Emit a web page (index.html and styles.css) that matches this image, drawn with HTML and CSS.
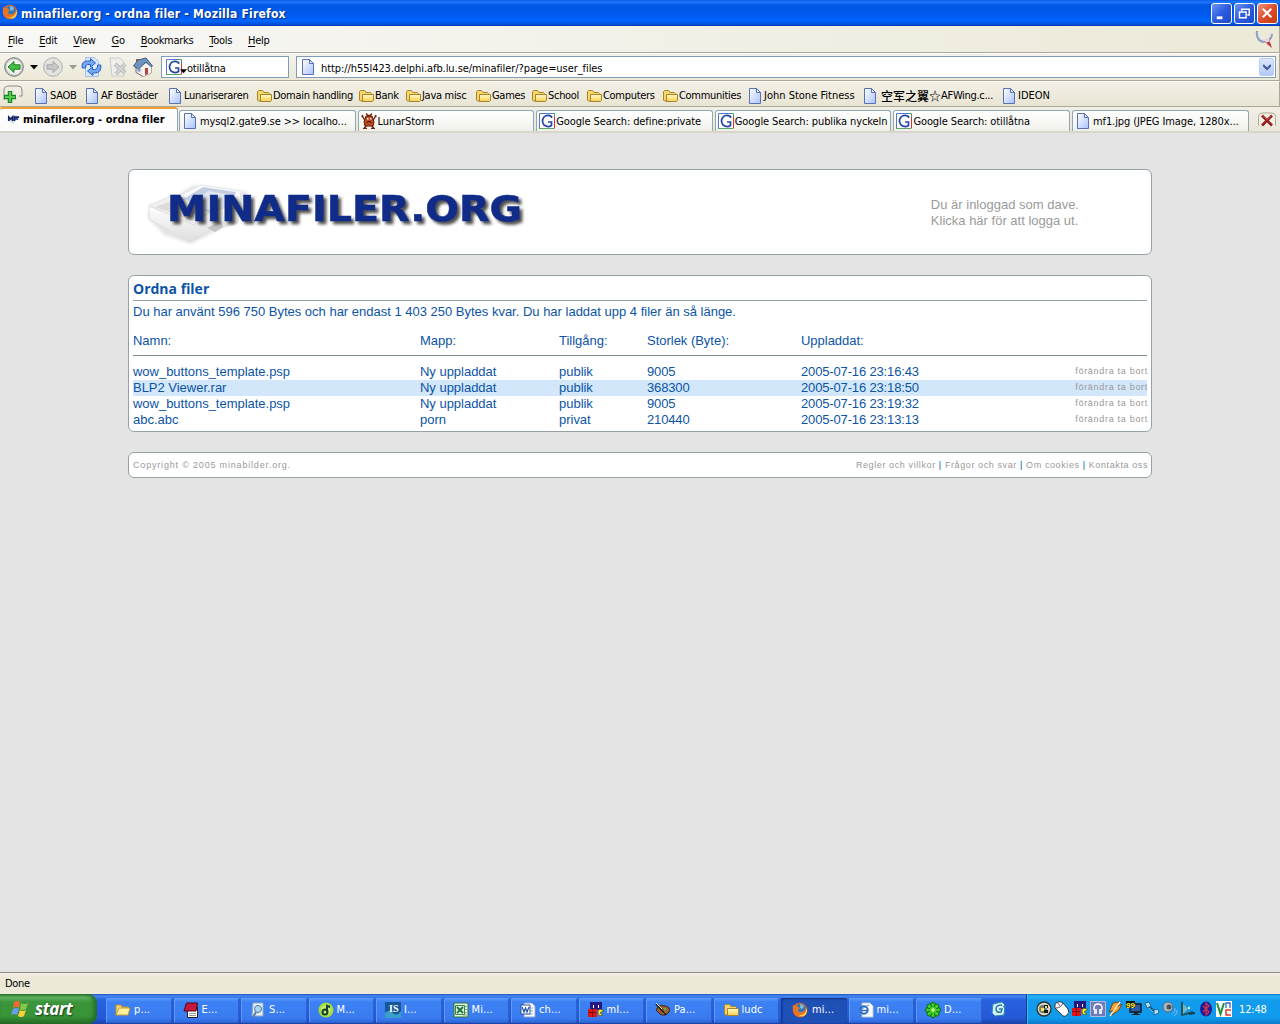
FILE: index.html
```html
<!DOCTYPE html>
<html lang="sv">
<head>
<meta charset="utf-8">
<title>minafiler.org - ordna filer</title>
<link rel="stylesheet" href="styles.css">
</head>
<body>
<svg class="defs" width="0" height="0">
  <defs>
    <linearGradient id="gPage" x1="0" y1="0" x2="1" y2="1"><stop offset="0" stop-color="#fff"/><stop offset="1" stop-color="#a9c2fb"/></linearGradient>
    <linearGradient id="gFolder" x1="0" y1="0" x2="0" y2="1"><stop offset="0" stop-color="#fffbc8"/><stop offset="1" stop-color="#f3cf51"/></linearGradient>
    <radialGradient id="gBtn"><stop offset="0" stop-color="#fff"/><stop offset=".7" stop-color="#f0f3ef"/><stop offset="1" stop-color="#aeb5ae"/></radialGradient>
    <linearGradient id="gFox" x1="0" y1="0" x2="1" y2="1"><stop offset="0" stop-color="#ef7b25"/><stop offset=".6" stop-color="#df4d12"/><stop offset="1" stop-color="#ffdf50"/></linearGradient>
    <linearGradient id="gBox" x1="0" y1="0" x2="0" y2="1"><stop offset="0" stop-color="#fff"/><stop offset="1" stop-color="#dedede"/></linearGradient>
    <filter id="soft" x="-10%" y="-20%" width="120%" height="150%"><feGaussianBlur stdDeviation="1.5"/></filter>
    <symbol id="page" viewBox="0 0 16 16"><path d="M2.5.5h7l4 4v11h-11z" fill="url(#gPage)" stroke="#5870b4"/><path d="M9.5.5v4h4z" fill="#dce6ff" stroke="#5870b4"/></symbol>
    <symbol id="folder" viewBox="0 0 16 16"><path d="M1.500 12V3.500l1-1h4l1.500 2h4.500l1 1V13H2.500z" fill="#f5d867" stroke="#a8822c"/><path d="M4.500 6.500h11v6l-1 1H4.500z" fill="url(#gFolder)" stroke="#a8822c"/></symbol>
    <symbol id="xpfolder" viewBox="0 0 16 16"><path d="M1 13V3h5l1 2h6v2" fill="#f5dc7b" stroke="#b88a28"/><path d="M1 13l3-7h11l-2 7z" fill="#fff09b" stroke="#c99d38"/></symbol>
    <symbol id="fox" viewBox="0 0 16 16"><circle cx="8" cy="8" r="7.300" fill="url(#gFox)"/><circle cx="8.500" cy="6.700" r="4.900" fill="#2d77bb"/><path d="M8 2q4 0 4 3l-2 2-2-1z" fill="#75bde0"/><path d="M1 2q0 2 2 2 3-1 3 1l2 1-2 2q0 3 4 2 4-1 4-5 2 6-2 9-5 3-9-1-3-4-2-11z" fill="#e97423"/><path d="M13 3q3 5-1 9-3 2-6 1 8 4 9-5z" fill="#ffd550"/></symbol>
    <symbol id="google" viewBox="0 0 16 16"><path fill="#fff" d="M0 0h16v16H0z"/><path d="M.5 16V.5H13" stroke="#5376d3" fill="none"/><path d="M13 .5h2.500V10" stroke="#47a05a" fill="none"/><path d="M15.500 4v11.500" stroke="#d2323b"/><path d="M0 15.500h15" stroke="#58a765"/><path d="M12.500 5V3.500Q8 1 5 4 2 8 5 12q4 3 7.500.500V9H9" fill="none" stroke="#2646a5" stroke-width="1.700"/></symbol>
    <symbol id="mirc" viewBox="0 0 16 16"><path d="M2 0h12v8H2z" fill="#25177f"/><path d="M5.500 3v3M10.500 3v3" stroke="#fff"/><path d="M0 7h9v8H0z" fill="#e01616"/><path d="M0 10.500h8M4.500 7v8" stroke="#86090c"/><path d="M15 8q-5-2-5 2 0 5 5 3l-3-2 3-2z" fill="#ffed2a" stroke="#443b08" stroke-width=".6"/></symbol>
    <symbol id="crab" viewBox="0 0 16 16"><path d="M5 .5l2 2h2l2-2M1 2l2 4 2 1M15 2l-2 4-2 1M.500 3.500h2M13.500 3.500h2" fill="none" stroke="#6d200d" stroke-width="1.300"/><path d="M5 3h6l1 3 1 3-1 4H4L3 9l1-3z" fill="#c04a1c" stroke="#5d1a09"/><path d="M5 13l-2 2.500h3M11 13l2 2.500h-3" fill="none" stroke="#6d200d" stroke-width="1.500"/><path d="M6 5h1.500v1.500H6zM9 5h1.500v1.500H9z" fill="#fff"/><path d="M5.500 9.500q2.500-2 5 0" stroke="#2c0b02" fill="none"/></symbol>
  </defs>
</svg>

<header class="titlebar">
  <svg class="ic"><use href="#fox"/></svg>
  <h1>minafiler.org - ordna filer - Mozilla Firefox</h1>
  <div class="winbtns">
    <span class="wb"><svg viewBox="0 0 20 20"><path d="M5 14.500h6" stroke="#fff" stroke-width="3"/></svg></span>
    <span class="wb"><svg viewBox="0 0 20 20"><path d="M7 7V5.500h8v6h-2" fill="none" stroke="#fff" stroke-width="1.500"/><path d="M4.700 8.500h7v6h-7z" fill="none" stroke="#fff" stroke-width="1.500"/></svg></span>
    <span class="wb close"><svg viewBox="0 0 20 20"><path d="M5 5l9 9M14 5l-9 9" stroke="#fff" stroke-width="2.200"/></svg></span>
  </div>
</header>

<nav class="menubar ui">
  <span><u>F</u>ile</span><span><u>E</u>dit</span><span><u>V</u>iew</span><span><u>G</u>o</span><span><u>B</u>ookmarks</span><span><u>T</u>ools</span><span><u>H</u>elp</span>
  <svg class="throbber" viewBox="0 0 20 20"><path d="M3 2q-1 10 7 11 7-1 8-8" fill="none" stroke="#8c9dbf" stroke-width="2.200"/><path d="M4 3q0 8 6 8 5 0 7-5" fill="none" stroke="#dbe1ec"/><path d="M12 11l4 2 2 6-5-4z" fill="#c0393f"/><circle cx="13" cy="11" r="2.300" fill="#f3d3d1"/></svg>
</nav>

<div class="navbar ui">
  <svg class="round" viewBox="0 0 20 20"><circle cx="10" cy="10" r="9.300" fill="url(#gBtn)" stroke="#777e77"/><path d="M4 10l6-5.500v3.300h6v4.400h-6v3.300z" fill="#46bd45" stroke="#188020"/></svg>
  <svg class="arr" viewBox="0 0 8 5"><path d="M0 0h8L4 4.500z"/></svg>
  <svg class="round" viewBox="0 0 20 20"><circle cx="10" cy="10" r="9.300" fill="#e3e3e0" stroke="#adaead"/><path d="M16 10l-6-5.500v3.300H4v4.400h6v3.300z" fill="#c6c7c7" stroke="#a5a7a6"/></svg>
  <svg class="arr dim" viewBox="0 0 8 5"><path d="M0 0h8L4 4.500z"/></svg>
  <svg class="reload" viewBox="0 0 20 20"><path d="M4 .5h9l4 4v15H4z" fill="#dbe7ff" stroke="#a7bdea"/><path d="M.700 11Q-.500 4 6 4h3V1.500l5 4.500-5 4V7.500H6Q3.500 8 4 11z" fill="#75a7f5" stroke="#2863c8"/><path d="M19.300 8q1 8-6 8h-2v2.500L6 14l5-4v2.500h2q3.500 0 3-4.500z" fill="#75a7f5" stroke="#2863c8"/></svg>
  <svg class="stop" viewBox="0 0 20 20"><path d="M2 1h10l4 4v14H4z" fill="#eeeeec" stroke="#cacac8"/><path d="M7 7l10 9M17 7L8 17" stroke="#b6b7b6" stroke-width="4"/><path d="M7 7l10 9M17 7L8 17" stroke="#d5d5d4" stroke-width="2"/></svg>
  <svg class="home" viewBox="0 0 20 20"><path d="M3 9l6-3 9 2v8l-8 3.500-7-4z" fill="#efebe2" stroke="#756e70"/><path d="M3 2h3v5H3z" fill="#9b5b5a"/><path d="M.500 9L5 3l8-2 6.500 8-1.500 1-5-5-7.500 7z" fill="#6c94bf" stroke="#405d83"/><path d="M9 12l4-6 5 4v6l-8 3.500z" fill="#f8f4ee"/><path d="M12 11h3v6l-3 1z" fill="#b64442"/><path d="M4.500 11.500h3v3h-3z" fill="#7898c8"/></svg>
  <div class="search"><svg class="ic"><use href="#google"/></svg><svg class="sarr" viewBox="0 0 8 5"><path d="M0 0h8L4 4.500z"/></svg><span>otillåtna</span></div>
  <div class="url"><svg class="ic"><use href="#page"/></svg><span>http://h55l423.delphi.afb.lu.se/minafiler/?page=user_files</span>
    <b class="drop"><svg viewBox="0 0 8 7"><path d="M0 1l4 4 4-4" fill="none" stroke="#435c91" stroke-width="2.200"/></svg></b></div>
</div>

<div class="bookmarks ui">
  <svg class="addtab" viewBox="0 0 20 20"><path d="M1 15V5q0-4 5-4h9q4 0 4 4v6h-3" fill="#f0eee4" stroke="#8d8b7e"/><path d="M7 6v12M1 12h12" stroke="#198523" stroke-width="4.500"/><path d="M7 7v10M2 12h10" stroke="#55ca52" stroke-width="2.200"/></svg>
  <div class="marks">
    <a><svg class="ic"><use href="#page"/></svg>SAOB</a>
    <a><svg class="ic"><use href="#page"/></svg>AF Bostäder</a>
    <a><svg class="ic"><use href="#page"/></svg>Lunariseraren</a>
    <a><svg class="ic"><use href="#folder"/></svg>Domain handling</a>
    <a><svg class="ic"><use href="#folder"/></svg>Bank</a>
    <a><svg class="ic"><use href="#folder"/></svg>Java misc</a>
    <a><svg class="ic"><use href="#folder"/></svg>Games</a>
    <a><svg class="ic"><use href="#folder"/></svg>School</a>
    <a><svg class="ic"><use href="#folder"/></svg>Computers</a>
    <a><svg class="ic"><use href="#folder"/></svg>Communities</a>
    <a class="wide"><svg class="ic"><use href="#page"/></svg>John Stone Fitness</a>
    <a class="cjk"><svg class="ic"><use href="#page"/></svg><span>空军之翼☆</span>AFWing.c...</a>
    <a class="wide"><svg class="ic"><use href="#page"/></svg>IDEON</a>
  </div>
</div>

<div class="tabs ui">
  <div class="tab on"><svg class="ic" viewBox="0 0 16 16"><path d="M1 9l7-6 6 3-6 7z" fill="#d7dce7"/><path d="M3 10V6l2 2 2-2v4M9 10V6h5M9 8h4" fill="none" stroke="#162565" stroke-width="1.800"/></svg><span>minafiler.org - ordna filer</span></div>
  <div class="tab"><svg class="ic"><use href="#page"/></svg><span>mysql2.gate9.se &gt;&gt; localho...</span></div>
  <div class="tab snug"><svg class="ic"><use href="#crab"/></svg><span>LunarStorm</span></div>
  <div class="tab snug"><svg class="ic"><use href="#google"/></svg><span>Google Search: define:private</span></div>
  <div class="tab snug"><svg class="ic"><use href="#google"/></svg><span>Google Search: publika nyckeln</span></div>
  <div class="tab snug"><svg class="ic"><use href="#google"/></svg><span>Google Search: otillåtna</span></div>
  <div class="tab"><svg class="ic"><use href="#page"/></svg><span>mf1.jpg (JPEG Image, 1280x...</span></div>
  <svg class="closetab" viewBox="0 0 20 18"><path d="M1.500 14V6q0-4.500 4.500-4.500h8q4.500 0 4.500 4.500v8" fill="#f3f0e4" stroke="#aaa797"/><path d="M5 4l10 10M15 4L5 14" stroke="#962023" stroke-width="2.800"/><path d="M6 4l4 4 4-4" fill="none" stroke="#d05b57"/></svg>
</div>

<main>
  <section class="box head">
    <svg class="logo" viewBox="0 0 400 80" width="400" height="80">
      <g transform="translate(0 2)">
      <path d="M7 39L53 12l54 7-12 29-45 23-27-9-16-17z" fill="#888" opacity=".22" filter="url(#soft)"/>
      <path d="M30 27L60 12l40 6-3 32-34 9z" fill="url(#gBox)" stroke="#e2e5e9"/>
      <path d="M38 29L62 14l33 5-8 21-37 5z" fill="#c3cfe0"/><path d="M49 33l18-15 24 4-5 18z" fill="#e2e8f1"/>
      <path d="M8 32l27-11 33 19-12 11-11 1z" fill="#f0f0f0" stroke="#e6e6e6"/>
      <path d="M8 33v13l40 23 7-3 33-20 2-14-28 11-9 9z" fill="url(#gBox)" stroke="#dedede"/>
      <path d="M14 34l20-7 28 15-7 7z" fill="#dcdcdc"/><path d="M66 55l14-7 2 6-8 5z" fill="#c4c4c4"/>
      </g>
      <text class="lt" x="26" y="50" textLength="355" lengthAdjust="spacingAndGlyphs">MINAFILER.ORG</text>
    </svg>
    <p class="login">Du är inloggad som dave.<br>Klicka här för att logga ut.</p>
  </section>

  <section class="box files">
    <h2>Ordna filer</h2>
    <p class="usage">Du har använt 596 750 Bytes och har endast 1 403 250 Bytes kvar. Du har laddat upp 4 filer än så länge.</p>
    <div class="row th"><span>Namn:</span><span>Mapp:</span><span>Tillgång:</span><span>Storlek (Byte):</span><span>Uppladdat:</span></div>
    <div class="row"><span>wow_buttons_template.psp</span><span>Ny uppladdat</span><span>publik</span><span class="n">9005</span><span class="n">2005-07-16 23:16:43</span><small>förändra ta bort</small></div>
    <div class="row hl"><span>BLP2 Viewer.rar</span><span>Ny uppladdat</span><span>publik</span><span class="n">368300</span><span class="n">2005-07-16 23:18:50</span><small>förändra ta bort</small></div>
    <div class="row"><span>wow_buttons_template.psp</span><span>Ny uppladdat</span><span>publik</span><span class="n">9005</span><span class="n">2005-07-16 23:19:32</span><small>förändra ta bort</small></div>
    <div class="row"><span>abc.abc</span><span>porn</span><span>privat</span><span class="n">210440</span><span class="n">2005-07-16 23:13:13</span><small>förändra ta bort</small></div>
  </section>

  <footer class="box foot">
    <small class="copy">Copyright © 2005 minabilder.org.</small>
    <small class="links">Regler och villkor <i>|</i> Frågor och svar <i>|</i> Om cookies <i>|</i> Kontakta oss</small>
  </footer>
</main>

<div class="status ui">Done</div>

<div class="taskbar ui">
  <div class="start"><svg viewBox="0 0 18 18"><path d="M3 2q3-2 6 0L8 8Q5 6 2 8z" fill="#f26a31"/><path d="M10 3q3 2 7 0l-2 6q-3 2-6 0z" fill="#86c944"/><path d="M2 9q3-2 6 0l-2 6q-3-2-6 0z" fill="#6c9cf2"/><path d="M9 10q3 2 6 0l-2 6q-3 2-6 0z" fill="#fbd136"/></svg><span>start</span></div>
  <div class="tasks">
    <div><svg class="ic"><use href="#xpfolder"/></svg>p...</div>
    <div><svg class="ic" viewBox="0 0 16 16"><path d="M4.500 5h10v10.500h-10z" fill="#fff" stroke="#222"/><path d="M6 11.500h7M6 13.500h7" stroke="#999"/><path d="M3.500 1h11l-1.500 8H1z" fill="#c7173c" stroke="#4a0716"/></svg>E...</div>
    <div><svg class="ic" viewBox="0 0 16 16"><path d="M3 1h10v13H2z" fill="#e6f0f8" stroke="#8eaac5"/><circle cx="8" cy="7" r="3.500" fill="#a9d8f2" stroke="#5079a0"/><path d="M6 10l-3 5" stroke="#5b7ba1" stroke-width="2"/></svg>S...</div>
    <div><svg class="ic" viewBox="0 0 16 16"><circle cx="8" cy="8" r="7.500" fill="#a3dc3c"/><circle cx="8" cy="8" r="5" fill="#c5ed68"/><circle cx="7" cy="10" r="2.500" fill="none" stroke="#153e3a" stroke-width="2"/><path d="M9 10V4l3 1" fill="none" stroke="#153e3a" stroke-width="2"/></svg>M...</div>
    <div><svg class="ic" viewBox="0 0 16 16"><path d="M0 0h16v16H0z" fill="#155896"/><path d="M0 11q4-4 8 0t8-2v7H0z" fill="#3b9dca"/><text x="4" y="10" class="glyph">IS</text></svg>I...</div>
    <div><svg class="ic" viewBox="0 0 16 16"><path d="M1 1h14v14H1z" fill="#e9f5e5" stroke="#2a7339"/><path d="M10 4.500h4M10 7.500h4M10 10.500h4M10 13h4" stroke="#75a775"/><path d="M2.500 3.500h9v9h-9z" fill="#e4f2e0" stroke="#32894b"/><path d="M4 5l6 6M10 5l-6 6" stroke="#217a3b" stroke-width="2"/></svg>Mi...</div>
    <div><svg class="ic" viewBox="0 0 16 16"><path d="M4 1h8l3 3v11H4z" fill="#fff" stroke="#8ba2cf"/><path d="M7 6h6M7 9h6M7 12h6" stroke="#94a9cf"/><path d="M1 3h9v9H1z" fill="#fff" stroke="#2c55a6"/><path d="M2 5l2 5 1.500-4L7 10l2-5" fill="none" stroke="#2855a8" stroke-width="1.300"/></svg>ch...</div>
    <div><svg class="ic"><use href="#mirc"/></svg>mI...</div>
    <div><svg class="ic" viewBox="0 0 16 16"><path d="M1 8q3-6 9-4 6 1 4 6-4 5-9 2z" fill="#986437" stroke="#3d2414"/><circle cx="6" cy="9" r="1.200" fill="#de3b2e"/><circle cx="10" cy="7" r="1.200" fill="#54b646"/><circle cx="9" cy="11" r="1.200" fill="#f0d744"/><path d="M1 2l10 11" stroke="#211c18" stroke-width="1.800"/><path d="M1 1l6 6" stroke="#f4d99b"/></svg>Pa...</div>
    <div><svg class="ic"><use href="#folder"/></svg>ludc</div>
    <div class="act"><svg class="ic"><use href="#fox"/></svg>mi...</div>
    <div><svg class="ic" viewBox="0 0 16 16"><path d="M4 1h8l3 3v11H4z" fill="#fff" stroke="#b9c4d5"/><circle cx="6" cy="8" r="3.700" fill="none" stroke="#2a6bc0" stroke-width="2"/><path d="M3 8.500h6" stroke="#2a6bc0" stroke-width="1.500"/><path d="M1 13Q1 7 11 3" fill="none" stroke="#468bd5"/></svg>mi...</div>
    <div><svg class="ic" viewBox="0 0 16 16"><g fill="#40cf29" stroke="#0b6411"><circle cx="8" cy="3" r="2.500"/><circle cx="8" cy="13" r="2.500"/><circle cx="3" cy="8" r="2.500"/><circle cx="13" cy="8" r="2.500"/><circle cx="4.300" cy="4.300" r="2.300"/><circle cx="11.700" cy="4.300" r="2.300"/><circle cx="4.300" cy="11.700" r="2.300"/><circle cx="11.700" cy="11.700" r="2.300"/></g><circle cx="8" cy="8" r="3.500" fill="#40cf29"/><circle cx="8" cy="8" r="1.700" fill="#dbf58b"/></svg>D...</div>
  </div>
  <svg class="ic desk" viewBox="0 0 16 16"><path d="M2 3l9-2 3 3-1 10-9 1-3-3z" fill="#d3f0fa" stroke="#3685ae"/><path d="M11 4Q5 4 5 8t5 3l1-3H8M12 6l3-2" fill="none" stroke="#287ba6" stroke-width="1.500"/></svg>
  <div class="tray">
    <svg class="ic" viewBox="0 0 16 16"><circle cx="8" cy="8" r="7" fill="#d6d6c9" stroke="#2b302c" stroke-width="1.300"/><circle cx="7" cy="8" r="4" fill="#78786b"/><path d="M8 4h4v3H8zM8 9h4v3H8z" fill="#121a16"/><path d="M9 5h2v2H9zM5 7h3v3H5z" fill="#f3e65b"/></svg>
    <svg class="ic" viewBox="0 0 16 16"><path d="M1 3q4-4 8-1l5 6q2 4-1 6-3 3-6-1L1 7z" fill="#fff" stroke="#333"/><path d="M2 7q5 0 7-5M3 1l3 4" fill="none" stroke="#555"/></svg>
    <svg class="ic"><use href="#mirc"/></svg>
    <svg class="ic" viewBox="0 0 16 16"><path d="M.5.500h15v15H.5z" fill="#717ab8" stroke="#b1bbdf"/><path d="M4 9V7q0-4 4-4t4 4v2" fill="none" stroke="#fff" stroke-width="1.500"/><path d="M4 8h3v5H4zM9 8h3v5H9z" fill="#e7e8fb"/></svg>
    <svg class="ic" viewBox="0 0 16 16"><path d="M5 2l6-1-2 5 5-3-3 6-7 5 2-5-5 2z" fill="#f4a436" stroke="#74451c"/><path d="M12 1L2 15" stroke="#ffe0a0" stroke-width="1.500"/></svg>
    <svg class="ic" viewBox="0 0 16 16"><path d="M4 3h11v8H4z" fill="#245dae" stroke="#121820" stroke-width="1.500"/><path d="M8 11h4v2h2v1H6v-1h2z" fill="#222"/><path d="M0 0h9v7H0z" fill="#15170e"/><text x="0" y="7" class="nine">99</text></svg>
    <svg class="ic" viewBox="0 0 16 16"><path d="M4 4l8 8" stroke="#165b8c" stroke-width="2"/><path d="M1 2l4-1 2 4-4 2zM10 9l4-1 1 4-5 2z" fill="#aee1fa" stroke="#27658e"/><path d="M5 7l4 4" stroke="#7bc5ee"/></svg>
    <svg class="ic" viewBox="0 0 16 16"><circle cx="6" cy="6" r="5" fill="#adb6c0" stroke="#596879"/><circle cx="7" cy="6" r="2.500" fill="#465460"/><path d="M10 13q4-2 3-6M12 15q4-3 3-6" fill="none" stroke="#83b9ff"/></svg>
    <svg class="ic" viewBox="0 0 16 16"><path d="M2 1v13l11-3" fill="none" stroke="#21555b" stroke-width="2"/><path d="M3 3l5 5-5 5z" fill="#79b6b7"/><circle cx="9" cy="7" r="1.200" fill="#d2eff1"/><path d="M9 13l6-1" stroke="#183c51" stroke-width="2"/></svg>
    <svg class="ic" viewBox="0 0 16 16"><ellipse cx="8" cy="8" rx="6" ry="7.500" fill="#15219a"/><path d="M5 5l6 6-3 3V2l3 3-6 6" fill="none" stroke="#e12e46" stroke-width="1.300"/></svg>
    <svg class="ic" viewBox="0 0 16 16"><path d="M0 0h16v16H0z" fill="#fff"/><path d="M1 2l3.500 11L8 2" fill="none" stroke="#1c9234" stroke-width="2"/><path d="M10 7V2h4v5" fill="none" stroke="#3b61d4" stroke-width="1.300"/><path d="M15 9h-5v5h5" fill="none" stroke="#dc3a35" stroke-width="1.500"/></svg>
    <time>12:48</time>
  </div>
</div>
</body>
</html>
```
FILE: styles.css
```css
* { box-sizing: border-box; }
body { margin: 0; width: 1280px; height: 1024px; overflow: hidden; display: flex; flex-direction: column; background: #e4e4e4; font-family: "Liberation Sans", Arial, sans-serif; }
.defs { position: absolute; }
svg { display: block; flex: none; }
.ic { width: 16px; height: 16px; }
.ui { font: 11px/14px "DejaVu Sans Condensed", "DejaVu Sans", "Noto Sans CJK SC", sans-serif; font-stretch: condensed; letter-spacing: -0.3px; color: #000; white-space: nowrap; }

.titlebar { flex: none; height: 26px; display: flex; align-items: center; padding: 0 2px 0 2px; background: linear-gradient(#0a58e8 0, #1e7af8 2px, #0058e6 5px, #0059ec 14px, #0066ff 21px, #0049cf 25px, #0037a5 26px); }
.titlebar .ic { margin-top: -3px; }
.titlebar h1 { margin: 1px 0 0 3px; font: bold 12px/16px "DejaVu Sans Condensed", "DejaVu Sans", sans-serif; font-stretch: condensed; color: #fff; text-shadow: 1px 1px 1px #0a2f85; white-space: nowrap; letter-spacing: .22px; }
.winbtns { margin-left: auto; display: flex; gap: 2px; }
.wb { width: 21px; height: 21px; border: 1px solid #fff; border-radius: 3px; background: linear-gradient(135deg, #6f95f0, #2c5be0 50%, #1f49c8); }
.wb svg { width: 19px; height: 19px; }
.wb.close { background: linear-gradient(135deg, #f0937a, #dd4c2a 50%, #c33d15); }

.menubar { flex: none; height: 27px; display: flex; align-items: center; padding: 2px 5px 0 8px; background: linear-gradient(90deg, #f8f8f7, #ece9d8); border-bottom: 1px solid #aca899; border-right: 1px solid #aca899; }
.menubar span { margin-right: 16px; padding-top: 1px; }
.menubar u { text-underline-offset: 2px; }
.throbber { width: 20px; height: 20px; margin: -2px 0 0 auto; }

.navbar { flex: none; height: 28px; display: flex; align-items: center; padding: 0 4px; background: linear-gradient(#f4f2eb, #ece9d8); border-top: 1px solid #fff; border-bottom: 1px solid #aca899; border-right: 1px solid #aca899; }
.round { width: 20px; height: 20px; }
.arr { width: 8px; height: 5px; margin: 0 5px 0 6px; }
.arr.dim { fill: #9b9a95; }
.reload { width: 21px; height: 20px; margin-left: -1px; }
.stop { width: 20px; height: 20px; margin: 0 5px 0 6px; }
.home { width: 20px; height: 20px; margin-right: 8px; }
.search, .url { display: flex; align-items: center; height: 22px; background: #fff; border: 1px solid #7f9db9; }
.search { width: 128px; padding-left: 4px; margin-right: 7px; }
.sarr { width: 7px; height: 5px; margin: 9px 0 0 -2px; }
.search span { margin-top: 3px; letter-spacing: -.2px; }
.url { flex: 1; padding: 0 1px 0 3px; margin-right: -1px; }
.url span { margin: 3px 0 0 5px; letter-spacing: -.07px; }
.drop { margin-left: auto; width: 15px; height: 18px; display: grid; place-items: center; border-radius: 2px; background: linear-gradient(#dce6fe, #b3c9f7); border: 1px solid #b9ccf6; }
.drop svg { width: 8px; height: 7px; }

.bookmarks { flex: none; height: 26px; display: flex; align-items: center; padding: 2px 0 0 3px; background: linear-gradient(#f2efe5, #e9e5d4); border-bottom: 1px solid #aca899; border-top: 1px solid #fbfaf5; border-right: 1px solid #aca899; }
.addtab { width: 20px; height: 20px; margin-right: 10px; }
.marks { display: grid; grid-template-columns: 51px 83px 89px 102px 47px 70px 56px 55px 76px 85px 115px 139px 70px; padding-top: 1px; }
.marks a { display: flex; align-items: center; gap: 1px; height: 18px; }
.marks .wide { letter-spacing: 0; }
.marks .cjk { gap: 0; }
.marks .cjk span { margin-left: 3px; letter-spacing: 0; font-family: "Noto Sans CJK SC", sans-serif; font-size: 12px; font-weight: 500; }

.tabs { flex: none; height: 26px; display: flex; align-items: flex-end; padding-top: 2px; background: linear-gradient(#f1efe5, #e9e6d9); border-bottom: 2px solid #d8d5cb; }
.tab { flex: none; width: 176.600px; margin-right: 2px; height: 21px; display: flex; align-items: center; gap: 2px; padding-left: 2px; border: 1px solid #91a7b4; border-bottom: 0; border-radius: 3px 3px 0 0; background: linear-gradient(#fff, #f0f0ea); letter-spacing: -.1px; }
.tab span { padding-top: 2px; }
.tab.snug { gap: 1px; }
.tab.on { width: 178px; margin-right: 1px; height: 24px; padding: 0 0 2px 6px; border-left: 0; border-top: 2px solid #f0a030; background: #fcfcfc; font-weight: bold; letter-spacing: .04px; }
.tab.on .ic { width: 15px; }
.closetab { width: 20px; height: 19px; margin: 0 3px 1px auto; }

main { flex: 1; min-height: 0; padding: 36px 128px 0; color: #0b54a6; font-size: 13px; line-height: 16px; }
.box { background: #fff; border: 1px solid #95a1a6; border-radius: 6px; }
.head { height: 86px; display: flex; justify-content: space-between; margin-bottom: 20px; }
.logo { margin: 1px 0 0 12px; }
.lt { font: bold 35px "DejaVu Sans", sans-serif; fill: #102c88; stroke: #102c88; stroke-width: .5; filter: drop-shadow(3px 3px 1.500px rgba(20, 20, 20, .75)); }
.login { margin: 27px 72px 0 0; color: #9a9a9a; white-space: nowrap; }
.files { height: 157px; padding: 5px 4px 0; margin-bottom: 20px; }
.files h2 { margin: 0; height: 20px; font: bold 14px/16px "Open Sans", sans-serif; border-bottom: 1px solid #95a1a6; }
.usage { margin: 3px 0 13px; white-space: nowrap; letter-spacing: -.005px; }
.row { display: grid; grid-template-columns: 287px 139px 88px 154px 1fr auto; height: 16px; white-space: nowrap; letter-spacing: -.02px; }
.row .n { letter-spacing: -.15px; }
.row small { line-height: 14px; margin-right: -1px; }
.row.th { height: 23px; margin-bottom: 8px; border-bottom: 1px solid #7f8b8c; }
.row.hl { background: #d2e7fa; }
small { font-size: 9px; letter-spacing: .7px; color: #999; line-height: 16px; }
.foot { height: 26px; display: flex; justify-content: space-between; align-items: center; padding: 0 3px 1px 4px; }
.foot .copy { letter-spacing: .82px; }
.foot .links { letter-spacing: .6px; }
.foot i { font-style: normal; color: #0b54a6; }

.status { flex: none; height: 22px; padding: 4px 5px; background: linear-gradient(#f4f2e8, #ece9d8 4px); border-top: 1px solid #8f8d86; }
.taskbar { flex: none; height: 30px; display: flex; align-items: center; color: #fff; background: linear-gradient(#2253bd 0, #4388f0 2px, #2762e0 6px, #2459d6 24px, #1b42a6); }
.start { width: 97px; height: 30px; display: flex; align-items: center; padding-left: 11px; gap: 6px; border-radius: 0 9px 9px 0; background: linear-gradient(#2f7a2f 0, #63b463 3px, #3c953c 8px, #389438 22px, #276c27); box-shadow: inset -3px 0 4px #1f6a25; }
.start svg { width: 18px; height: 18px; }
.start span { font: italic bold 17px/20px "Open Sans", sans-serif; letter-spacing: -.4px; text-shadow: 1px 1px 2px #163b16; }
.tasks { display: grid; grid-template-columns: repeat(13, 65.500px); gap: 2px; margin: 2px 0 0 9px; }
.tasks div { height: 25px; display: flex; align-items: center; gap: 3px; padding-left: 9px; border-radius: 2px; background: linear-gradient(#5a98fb, #3c81f3 4px, #3a7cf0 20px, #2c66d8); box-shadow: inset 1px 1px #5d9afa, inset -1px -1px #2b62d0; letter-spacing: .1px; }
.tasks .act { background: #1e50b5; box-shadow: inset 1px 1px 2px #10307c; padding-left: 11px; gap: 4px; }
.glyph { font: bold 10px "Liberation Serif", serif; fill: #fff; letter-spacing: 0; }
.nine { font: bold 8px "Liberation Sans", sans-serif; fill: #ffef30; letter-spacing: 0; }
.desk { margin-left: 9px; }
.tray { margin-left: auto; width: 254px; height: 30px; display: flex; align-items: center; gap: 2px; padding-left: 9px; border-left: 1px solid #0c357f; background: linear-gradient(#1075c0 0, #28b0f8 2px, #129bec 7px, #119bec 24px, #0b78ca); box-shadow: inset 1px 0 #35bdf8; }
.tray time { margin: 2px 0 0 5px; letter-spacing: -.15px; }
```
